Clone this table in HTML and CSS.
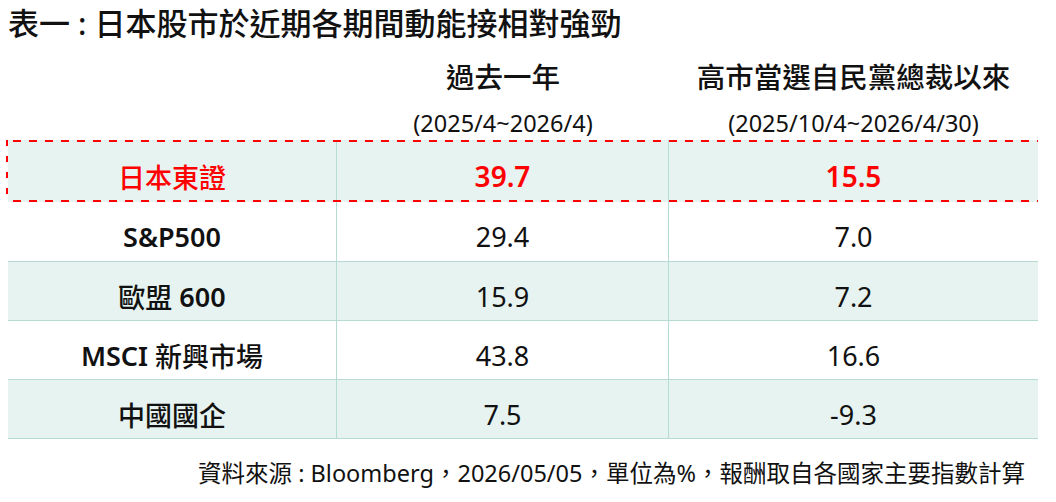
FILE: index.html
```html
<!DOCTYPE html>
<html lang="zh-Hant">
<head>
<meta charset="utf-8">
<title>表一</title>
<link rel="stylesheet" href="styles.css">
</head>
<body>
<div class="page">
  <h1 class="title">表一 : 日本股市於近期各期間動能接相對強勁</h1>
  <div class="head head-main">
    <div class="hcell"></div>
    <div class="hcell">過去一年</div>
    <div class="hcell">高市當選自民黨總裁以來</div>
  </div>
  <div class="head head-sub">
    <div class="hcell"></div>
    <div class="hcell">(2025/4~2026/4)</div>
    <div class="hcell">(2025/10/4~2026/4/30)</div>
  </div>
  <div class="table">
    <div class="row row-hl">
      <div class="cell label red">日本東證</div>
      <div class="cell red bold">39.7</div>
      <div class="cell red bold">15.5</div>
    </div>
    <div class="row row-white row-first">
      <div class="cell label"><span class="latin">S&amp;P500</span></div>
      <div class="cell">29.4</div>
      <div class="cell">7.0</div>
    </div>
    <div class="row row-green">
      <div class="cell label">歐盟&nbsp;<span class="latin">600</span></div>
      <div class="cell">15.9</div>
      <div class="cell">7.2</div>
    </div>
    <div class="row row-white">
      <div class="cell label"><span class="latin">MSCI</span>&nbsp;新興市場</div>
      <div class="cell">43.8</div>
      <div class="cell">16.6</div>
    </div>
    <div class="row row-green">
      <div class="cell label">中國國企</div>
      <div class="cell">7.5</div>
      <div class="cell">-9.3</div>
    </div>
  </div>
  <p class="note">資料來源 : Bloomberg，2026/05/05，單位為%，報酬取自各國家主要指數計算</p>
</div>
</body>
</html>
```

FILE: styles.css
```css
html, body {
  margin: 0;
  padding: 0;
  background: #ffffff;
}

body {
  font-family: "Noto Sans", "Noto Sans CJK TC", sans-serif;
  color: #111111;
}

.page {
  width: 1056px;
  height: 502px;
  overflow: hidden;
}

.title {
  margin: 0;
  padding: 1px 0 0 8px;
  height: 43px;
  font-size: 31px;
  line-height: 44px;
  font-weight: 500;
  white-space: nowrap;
}

.head {
  display: grid;
  grid-template-columns: 329px 332px 369px;
  margin-left: 8px;
  width: 1030px;
}

.hcell {
  display: flex;
  align-items: center;
  justify-content: center;
  white-space: nowrap;
}

.head-main {
  height: 62px;
  font-size: 28.5px;
  font-weight: 500;
}

.head-sub {
  height: 34px;
  font-size: 23.5px;
  font-weight: 400;
}

.table {
  margin-left: 8px;
  width: 1030px;
}

.row {
  display: grid;
  grid-template-columns: 329px 332px 369px;
  height: 59px;
  border-bottom: 1px solid #b6dbd2;
  box-sizing: border-box;
}

.row-first {
  height: 60px;
}

.row-green {
  background: #e6f3f0;
}

.row-white {
  background: #ffffff;
}

.row-hl {
  position: relative;
  height: 62px;
  background: #e6f3f0;
  border-bottom: none;
}

.row-hl::before {
  content: "";
  position: absolute;
  left: -2px;
  top: 0;
  right: 0;
  bottom: 0;
  pointer-events: none;
  background:
    repeating-linear-gradient(to right, #ff0000 0 8px, transparent 8px 16px) 7px 0 / calc(100% - 7px) 2px no-repeat,
    repeating-linear-gradient(to right, #ff0000 0 8px, transparent 8px 16px) 7px 100% / calc(100% - 7px) 2px no-repeat,
    repeating-linear-gradient(to bottom, #ff0000 0 6px, transparent 6px 16px) 0 0 / 2px 100% no-repeat;
}

.cell {
  display: flex;
  align-items: center;
  justify-content: center;
  padding-top: 10px;
  font-size: 27px;
  font-weight: 400;
  white-space: nowrap;
}

.cell:nth-child(1),
.cell:nth-child(2) {
  border-right: 1px solid #b6dbd2;
}

.label {
  font-weight: 500;
}

.latin {
  font-weight: 600;
}

.red {
  color: #ff0000;
}

.bold {
  font-size: 28px;
  font-weight: 600;
}

.note {
  margin: 0;
  padding: 18px 31px 0 0;
  text-align: right;
  font-size: 23.5px;
  line-height: 32px;
  white-space: nowrap;
}
```
